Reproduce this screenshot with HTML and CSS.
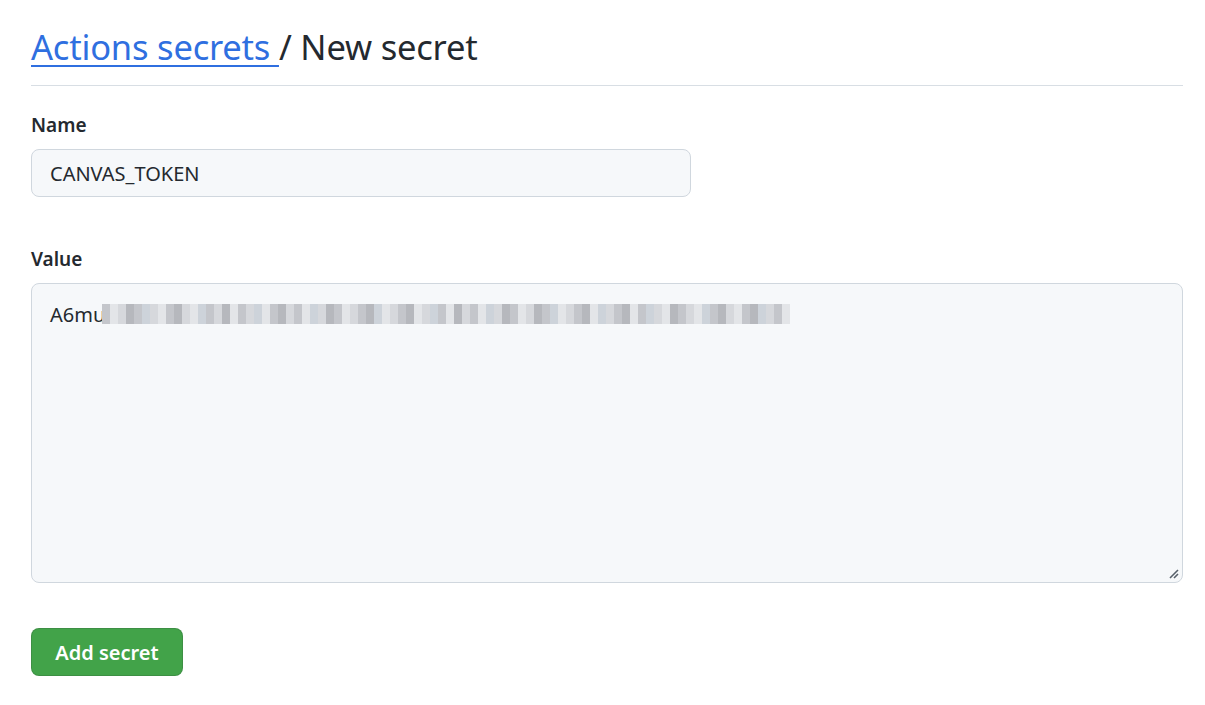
FILE: index.html
```html
<!DOCTYPE html>
<html>
<head>
<meta charset="utf-8">
<link rel="stylesheet" href="styles.css">
</head>
<body>
<main class="page">
  <div class="subhead">
    <h2 class="subhead-heading"><a href="#" class="crumb">Actions secrets </a>/ New secret</h2>
  </div>
  <form class="form">
    <div class="form-group">
      <label class="label">Name</label>
      <div class="input">CANVAS_TOKEN</div>
    </div>
    <div class="form-group">
      <label class="label">Value</label>
      <div class="textarea">
        <div class="value-line"><span class="value-text">A6mu</span><span class="blur">
          <i class="c2"></i><i class="c3"></i><i class="c1"></i><i class="c4"></i><i class="c2"></i><i class="c5"></i><i class="c1"></i><i class="c3"></i><i class="c2"></i><i class="c4"></i><i class="c1"></i><i class="c3"></i><i class="c5"></i><i class="c2"></i><i class="c1"></i><i class="c4"></i><i class="c3"></i><i class="c2"></i><i class="c1"></i><i class="c5"></i><i class="c3"></i><i class="c2"></i><i class="c4"></i><i class="c1"></i><i class="c2"></i><i class="c3"></i><i class="c5"></i><i class="c1"></i><i class="c4"></i><i class="c2"></i><i class="c3"></i><i class="c1"></i><i class="c2"></i><i class="c4"></i><i class="c5"></i><i class="c3"></i><i class="c1"></i><i class="c2"></i><i class="c4"></i><i class="c3"></i><i class="c1"></i><i class="c5"></i><i class="c2"></i><i class="c3"></i><i class="c4"></i><i class="c1"></i><i class="c2"></i><i class="c3"></i><i class="c5"></i><i class="c1"></i><i class="c4"></i><i class="c2"></i><i class="c3"></i><i class="c1"></i><i class="c4"></i><i class="c2"></i><i class="c5"></i><i class="c3"></i><i class="c1"></i><i class="c2"></i><i class="c4"></i><i class="c3"></i><i class="c5"></i><i class="c1"></i><i class="c2"></i><i class="c4"></i><i class="c3"></i><i class="c2"></i><i class="c5"></i><i class="c1"></i><i class="c3"></i><i class="c4"></i><i class="c2"></i><i class="c1"></i><i class="c3"></i><i class="c5"></i><i class="c2"></i><i class="c4"></i><i class="c1"></i><i class="c3"></i><i class="c2"></i><i class="c4"></i><i class="c5"></i><i class="c1"></i><i class="c2"></i><i class="c3"></i>
        </span></div>
        <svg class="grip" width="12" height="12" viewBox="0 0 12 12"><path d="M11 3 L3 11 M11 7 L7 11" stroke="#57606a" stroke-width="1.6" fill="none"/></svg>
      </div>
    </div>
    <button type="button" class="btn-primary">Add secret</button>
  </form>
</main>
</body>
</html>
```
FILE: styles.css
```css
* { box-sizing: border-box; }
html, body { margin: 0; background: #ffffff; }
body {
  font-family: "Noto Sans", "Open Sans", sans-serif;
  color: #24292f;
}
.page {
  padding: 22px 22px 0 31px;
  width: 1205px;
}
.subhead {
  border-bottom: 1px solid #d8dee4;
  padding-bottom: 13px;
  width: 1152px;
}
.subhead-heading {
  margin: 0;
  font-size: 34.5px;
  font-weight: 400;
  line-height: 50px;
  letter-spacing: -0.2px;
}
.crumb {
  color: #2f6fe0;
  text-decoration: underline;
  text-decoration-thickness: 2px;
  text-underline-offset: 5px;
}
.form { display: flex; flex-direction: column; }
.form-group { display: flex; flex-direction: column; }
.form-group:first-child { margin-top: 27px; }
.form-group + .form-group { margin-top: 50px; }
.label {
  font-size: 19px;
  font-weight: 600;
  line-height: 24px;
  margin-bottom: 12px;
}
.input {
  width: 660px;
  height: 48px;
  background: #f6f8fa;
  border: 1px solid #d0d7de;
  border-radius: 8px;
  padding: 0 18px;
  font-size: 20px;
  display: flex;
  align-items: center;
}
.textarea {
  position: relative;
  width: 1152px;
  height: 300px;
  background: #f6f8fa;
  border: 1px solid #d0d7de;
  border-radius: 8px;
  padding: 16px 18px;
  font-size: 20px;
}
.value-line { display: flex; align-items: center; height: 28px; }
.blur { display: flex; height: 20px; align-items: stretch; margin-left: -3px; }
.blur i {
  display: block;
  width: 8px;
}
.blur .c1 { background: #d6d8dc; }
.blur .c2 { background: #c4c6cb; }
.blur .c3 { background: #e3e5e8; }
.blur .c4 { background: #b6b8bd; }
.blur .c5 { background: #cdd3da; }
.grip { position: absolute; right: 3px; bottom: 3px; }
.btn-primary {
  margin-top: 45px;
  align-self: flex-start;
  width: 152px;
  height: 48px;
  border: 1px solid rgba(31,35,40,0.15);
  border-radius: 8px;
  background: #42a349;
  color: #ffffff;
  font-family: "Noto Sans", "Open Sans", sans-serif;
  font-size: 20px;
  font-weight: 600;
  cursor: pointer;
}
```
